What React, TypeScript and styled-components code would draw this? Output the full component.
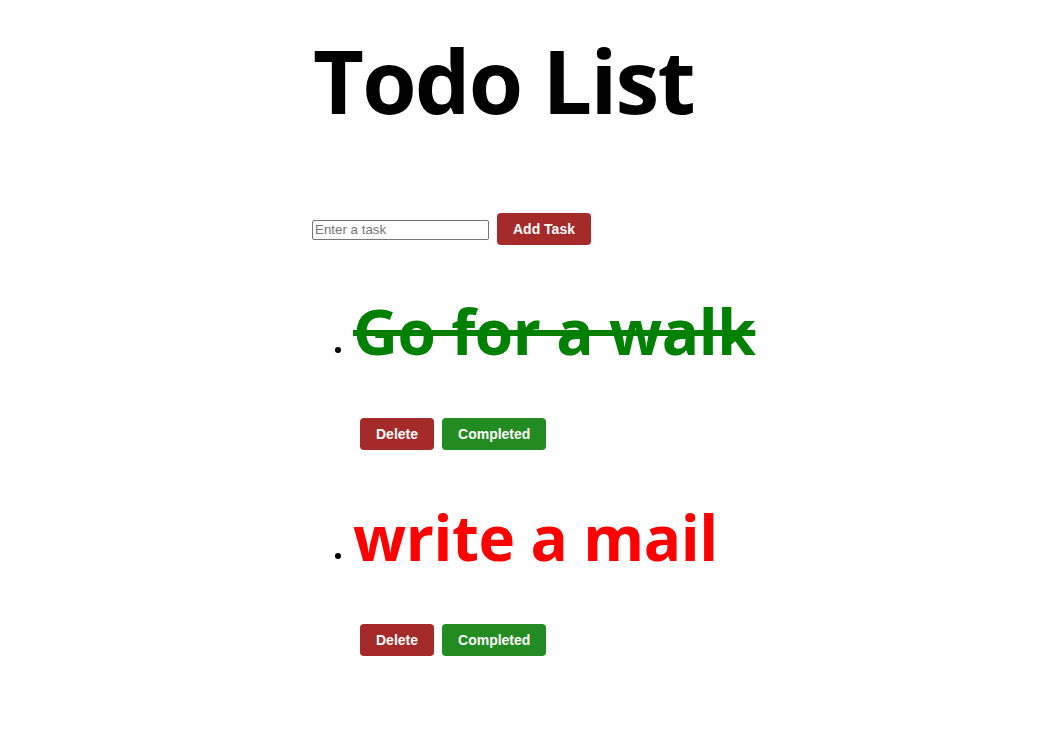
import React, { useState } from "react";
import styled, { createGlobalStyle } from "styled-components";

interface ITask {
  id: number;
  text: string;
  done: boolean;
}

interface IStyledTask {
  done: boolean;
}

const GlobalStyle = createGlobalStyle`
  body {
    margin: 8px;
    background: #fff;
    font-family: "Open Sans", "Noto Sans", sans-serif;
  }
`;

function App() {
  const [tasks, setTasks] = useState<ITask[]>([
    { id: 1, text: "Go for a walk", done: true },
    { id: 2, text: "write a mail", done: false },
  ]);
  const [value, setValue] = useState("");

  const addTask = () => {
    if (!value.trim()) return;
    setTasks([...tasks, { id: Date.now(), text: value, done: false }]);
    setValue("");
  };

  const removeTask = (id: number) => setTasks(tasks.filter((t) => t.id !== id));

  const toggleTask = (id: number) =>
    setTasks(tasks.map((t) => (t.id === id ? { ...t, done: !t.done } : t)));

  return (
    <Wrap>
      <GlobalStyle />
      <Title>Todo List</Title>
      <Form>
        <TaskInput
          placeholder="Enter a task"
          value={value}
          onChange={(e) => setValue(e.target.value)}
        />
        <Button variant="danger" onClick={addTask}>
          Add Task
        </Button>
      </Form>
      <List>
        {tasks.map((task) => (
          <Item key={task.id}>
            <TaskText done={task.done}>{task.text}</TaskText>
            <Actions>
              <Button variant="danger" onClick={() => removeTask(task.id)}>
                Delete
              </Button>
              <Button variant="success" onClick={() => toggleTask(task.id)}>
                Completed
              </Button>
            </Actions>
          </Item>
        ))}
      </List>
    </Wrap>
  );
}

export default App;

const Wrap = styled.div`
  padding-left: 304px;
`;

const Title = styled.h1`
  margin: 20px 0 0 1px;
  font-size: 88px;
  line-height: 1.2;
  font-weight: 700;
  letter-spacing: -1.8px;
  color: #000;
`;

const Form = styled.div`
  display: flex;
  align-items: flex-start;
  gap: 8px;
  margin-top: 79px;
`;

const TaskInput = styled.input`
  box-sizing: border-box;
  width: 177px;
  height: 20px;
  margin: 7px 0 0;
  padding: 1px 2px;
  border: 1px solid #767676;
  border-radius: 2px;
  font-family: "Liberation Sans", Arial, sans-serif;
  font-size: 13.33px;

  &::placeholder {
    color: #757575;
  }
`;

const Button = styled.button<{ variant: "danger" | "success" }>`
  box-sizing: border-box;
  height: 32px;
  padding: 0 16px;
  border: none;
  border-radius: 4px;
  background: ${(props) => (props.variant === "danger" ? "#a52a2a" : "#228b22")};
  color: #fff;
  font-family: "Liberation Sans", Arial, sans-serif;
  font-size: 14px;
  font-weight: 700;
  cursor: pointer;
`;

const List = styled.ul`
  margin: 49px 0 0;
  padding-left: 41px;
`;

const Item = styled.li`
  margin-bottom: 50px;
  font-size: 16px;
`;

const TaskText = styled.span<IStyledTask>`
  font-size: 62px;
  line-height: 1.2;
  font-weight: 700;
  letter-spacing: -0.4px;
  color: ${(props) => (props.done ? "#008000" : "#ff0000")};
  text-decoration: ${(props) => (props.done ? "line-through" : "none")};
`;

const Actions = styled.div`
  display: flex;
  gap: 8px;
  margin-top: 50px;
  padding-left: 7px;
`;
